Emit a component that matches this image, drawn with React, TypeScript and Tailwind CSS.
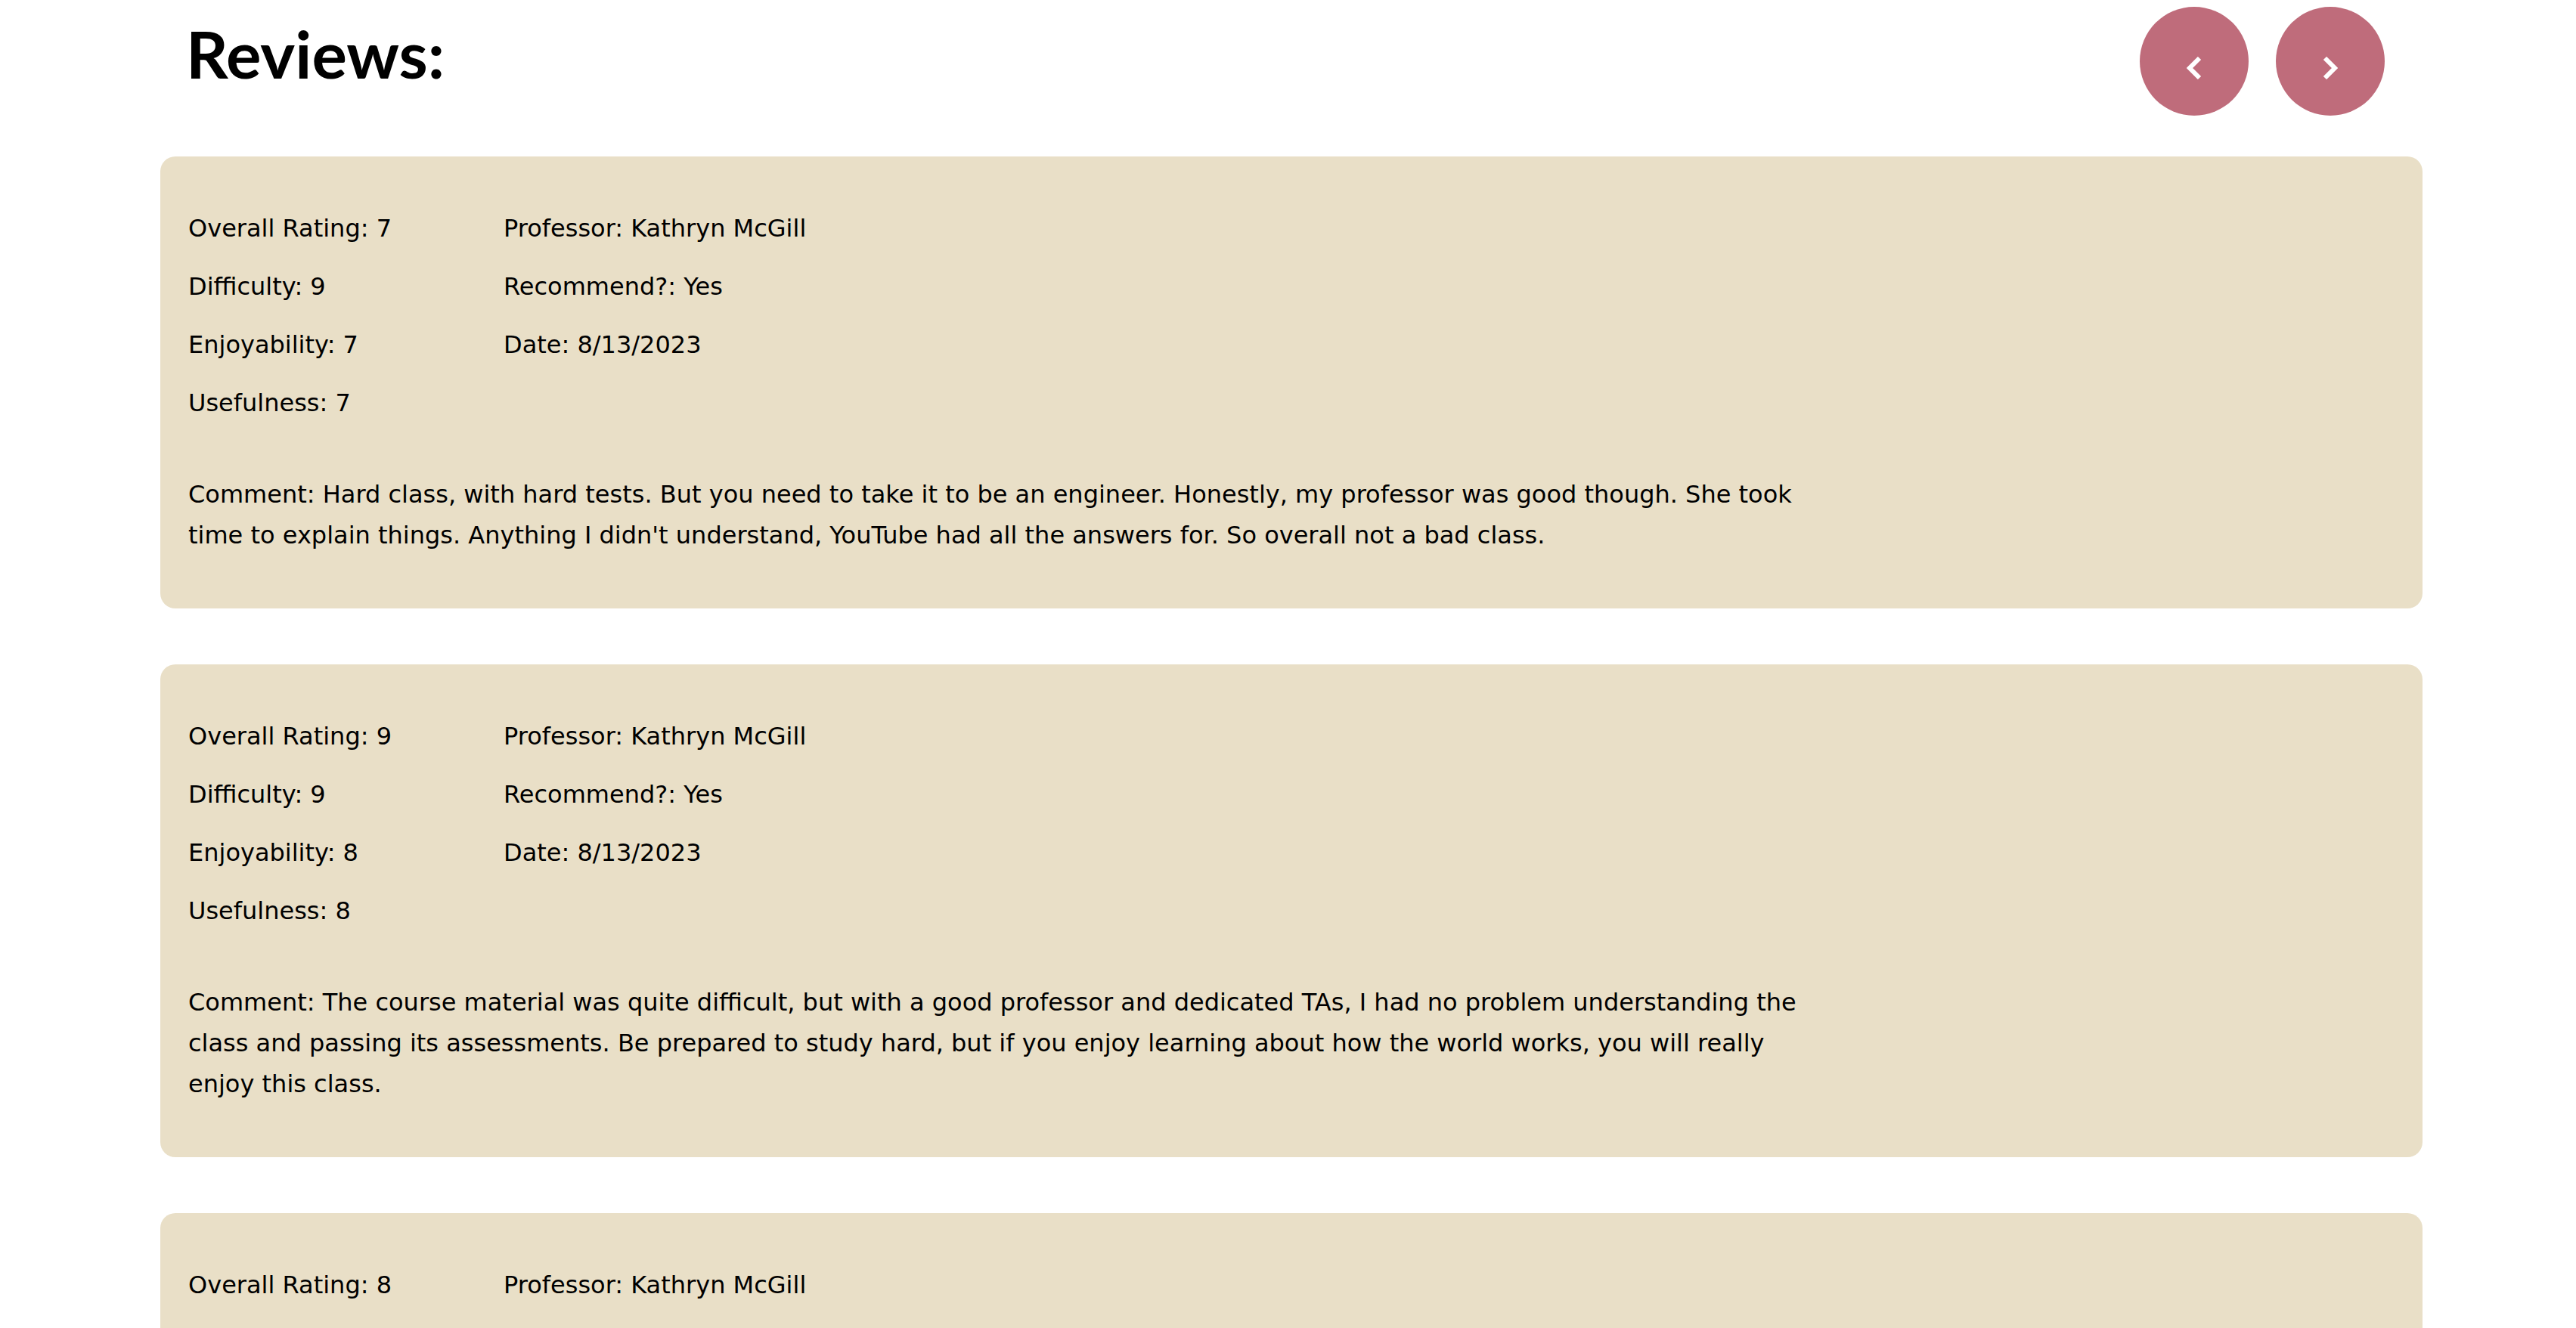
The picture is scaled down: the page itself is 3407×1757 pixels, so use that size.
import React from 'react';

type Review = {
  overall: number;
  difficulty: number;
  enjoyability: number;
  usefulness: number;
  professor: string;
  recommend: string;
  date: string;
  comment: string;
};

const reviews: Review[] = [
  {
    overall: 7,
    difficulty: 9,
    enjoyability: 7,
    usefulness: 7,
    professor: 'Kathryn McGill',
    recommend: 'Yes',
    date: '8/13/2023',
    comment:
      "Hard class, with hard tests. But you need to take it to be an engineer. Honestly, my professor was good though. She took time to explain things. Anything I didn't understand, YouTube had all the answers for. So overall not a bad class.",
  },
  {
    overall: 9,
    difficulty: 9,
    enjoyability: 8,
    usefulness: 8,
    professor: 'Kathryn McGill',
    recommend: 'Yes',
    date: '8/13/2023',
    comment:
      'The course material was quite difficult, but with a good professor and dedicated TAs, I had no problem understanding the class and passing its assessments. Be prepared to study hard, but if you enjoy learning about how the world works, you will really enjoy this class.',
  },
  {
    overall: 8,
    difficulty: 8,
    enjoyability: 8,
    usefulness: 9,
    professor: 'Kathryn McGill',
    recommend: 'Yes',
    date: '8/13/2023',
    comment:
      'Lots of work every week, but the labs tie everything together. Go to office hours early and often.',
  },
];

function Chevron({ dir }: { dir: 'left' | 'right' }) {
  return (
    <svg width="20" height="30" viewBox="0 0 20 30" className="mt-[18px]">
      <polyline
        points={dir === 'left' ? '17,2 4,15 17,28' : '3,2 16,15 3,28'}
        fill="none"
        stroke="white"
        strokeWidth="6"
      />
    </svg>
  );
}

function ReviewCard({ review }: { review: Review }) {
  return (
    <div className="bg-[#e9dfc7] rounded-[20px] pt-[68px] pb-[70px] px-[37px]">
      <div className="grid grid-cols-[417px_1fr] gap-y-[23px] leading-[54px]">
        <p>Overall Rating: {review.overall}</p>
        <p>Professor: {review.professor}</p>
        <p>Difficulty: {review.difficulty}</p>
        <p>Recommend?: {review.recommend}</p>
        <p>Enjoyability: {review.enjoyability}</p>
        <p>Date: {review.date}</p>
        <p>Usefulness: {review.usefulness}</p>
      </div>
      <p className="mt-[67px] max-w-[2165px] leading-[54px]">Comment: {review.comment}</p>
    </div>
  );
}

export default function App() {
  return (
    <div className="min-h-screen bg-white text-black font-['DejaVu_Sans',sans-serif] text-[32px]">
      <div className="ml-[212px] w-[2992px]">
        <div className="flex items-start justify-between pl-[34px] pr-[50px]">
          <h1 className="mt-[27px] font-['Lato',sans-serif] text-[87px] font-bold leading-none">
            Reviews:
          </h1>
          <div className="flex gap-[36px] pt-[9px]">
            <button className="w-[144px] h-[144px] rounded-full bg-[#bf6c7b] flex justify-center items-center">
              <Chevron dir="left" />
            </button>
            <button className="w-[144px] h-[144px] rounded-full bg-[#bf6c7b] flex justify-center items-center">
              <Chevron dir="right" />
            </button>
          </div>
        </div>
        <div className="mt-[54px] flex flex-col gap-[74px] pb-[74px]">
          {reviews.map((r, i) => (
            <ReviewCard key={i} review={r} />
          ))}
        </div>
      </div>
    </div>
  );
}
